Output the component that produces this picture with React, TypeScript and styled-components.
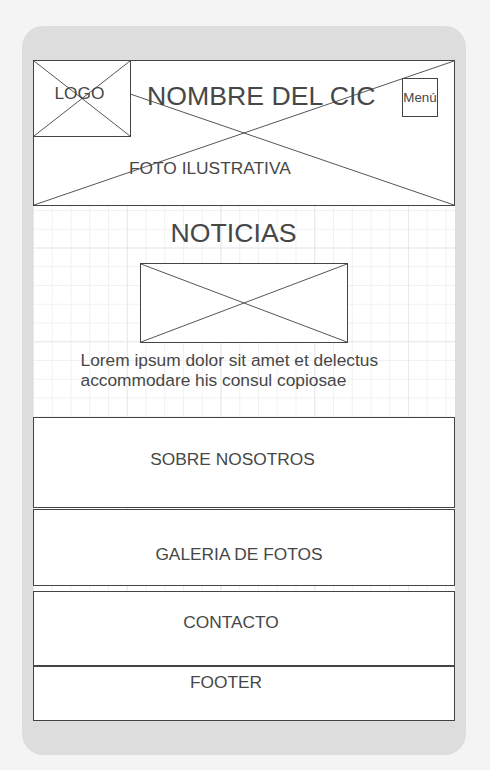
import React from "react";
import styled, { createGlobalStyle } from "styled-components";

const Global = createGlobalStyle`
  html, body { margin: 0; padding: 0; background: #f4f4f4; }
  body { font-family: "Liberation Sans", Arial, sans-serif; color: #474747; }
`;

const Frame = styled.div`
  margin: 26px 0 0 22px;
  width: 444px;
  box-sizing: border-box;
  padding: 34px 11px 34px;
  background: #dddddd;
  border-radius: 21px;
`;

const Screen = styled.div`
  display: flex;
  flex-direction: column;
  height: 661px;
  background-color: #ffffff;
  background-image:
    linear-gradient(to right, #e9e9e9 1px, transparent 1px),
    linear-gradient(to bottom, #e9e9e9 1px, transparent 1px),
    linear-gradient(to right, #f1f1f1 1px, transparent 1px),
    linear-gradient(to bottom, #f1f1f1 1px, transparent 1px);
  background-size: 93.75px 93.75px, 93.75px 93.75px, 18.75px 18.75px, 18.75px 18.75px;
`;

const Header = styled.header`
  position: relative;
  height: 146px;
  box-sizing: border-box;
  border: 1px solid #444;
  background: #fff;
  display: flex;
  flex-direction: column;
`;

const Cross = styled.svg`
  position: absolute;
  inset: 0;
  width: 100%;
  height: 100%;
  pointer-events: none;
`;

const TopRow = styled.div`
  position: relative;
  display: flex;
  align-items: flex-start;
`;

const Logo = styled.div`
  position: relative;
  width: 97px;
  height: 76px;
  box-sizing: border-box;
  border-right: 1px solid #444;
  border-bottom: 1px solid #444;
  background: #fff;
  padding: 22px 5px 0 0;
  text-align: center;
  font-size: 17.33px;
  line-height: 20px;
`;

const LogoText = styled.span`
  position: relative;
`;

const Title = styled.h1`
  margin: 20px 0 0 16px;
  font-weight: normal;
  font-size: 26.67px;
  line-height: 30px;
  white-space: nowrap;
  position: relative;
`;

const MenuButton = styled.div`
  position: relative;
  margin: 17px 16px 0 auto;
  width: 36px;
  height: 39px;
  box-sizing: border-box;
  border: 1px solid #444;
  display: flex;
  align-items: center;
  justify-content: center;
  font-size: 13.33px;
`;

const Caption = styled.div`
  position: relative;
  margin-top: 21px;
  padding-left: 95px;
  font-size: 17.33px;
  line-height: 20px;
`;

const News = styled.section`
  height: 211px;
  flex-shrink: 0;
  display: flex;
  flex-direction: column;
  align-items: center;
  padding-top: 12px;
  box-sizing: border-box;
`;

const NewsTitle = styled.h2`
  margin: 0;
  padding-right: 21px;
  font-weight: normal;
  font-size: 26.67px;
  line-height: 30px;
`;

const NewsImage = styled.div`
  position: relative;
  margin-top: 15px;
  width: 208px;
  height: 80px;
  box-sizing: border-box;
  border: 1px solid #444;
  background: #fff;
`;

const NewsText = styled.p`
  align-self: flex-start;
  margin: 8px 0 0 47.5px;
  width: 330px;
  font-size: 17.33px;
  line-height: 19.5px;
`;

const Block = styled.section<{ $h: number; $top: number; $shift: number; $gap?: number }>`
  flex-shrink: 0;
  height: ${(p) => p.$h}px;
  margin-top: ${(p) => p.$gap ?? 0}px;
  box-sizing: border-box;
  border: 1px solid #444;
  background: #fff;
  display: flex;
  justify-content: center;
  align-items: flex-start;
  padding-top: ${(p) => p.$top}px;
  padding-right: ${(p) => p.$shift}px;
  font-size: 17.33px;
  line-height: 20px;
`;

const X = () => (
  <Cross viewBox="0 0 100 100" preserveAspectRatio="none">
    <line x1="0" y1="0" x2="100" y2="100" stroke="#555" strokeWidth="1" vectorEffect="non-scaling-stroke" />
    <line x1="0" y1="100" x2="100" y2="0" stroke="#555" strokeWidth="1" vectorEffect="non-scaling-stroke" />
  </Cross>
);

export default function App() {
  return (
    <>
      <Global />
      <Frame>
        <Screen>
          <Header>
            <X />
            <TopRow>
              <Logo>
                <X />
                <LogoText>LOGO</LogoText>
              </Logo>
              <Title>NOMBRE DEL CIC</Title>
              <MenuButton>Menú</MenuButton>
            </TopRow>
            <Caption>FOTO ILUSTRATIVA</Caption>
          </Header>
          <News>
            <NewsTitle>NOTICIAS</NewsTitle>
            <NewsImage>
              <X />
            </NewsImage>
            <NewsText>Lorem ipsum dolor sit amet et delectus accommodare his consul copiosae</NewsText>
          </News>
          <Block $h={91} $top={31} $shift={23}>SOBRE NOSOTROS</Block>
          <Block $h={77} $top={34} $shift={10} $gap={1}>GALERIA DE FOTOS</Block>
          <Block $h={75} $top={20} $shift={26} $gap={5}>CONTACTO</Block>
          <Block $h={55} $top={5} $shift={36}>FOOTER</Block>
        </Screen>
      </Frame>
    </>
  );
}
